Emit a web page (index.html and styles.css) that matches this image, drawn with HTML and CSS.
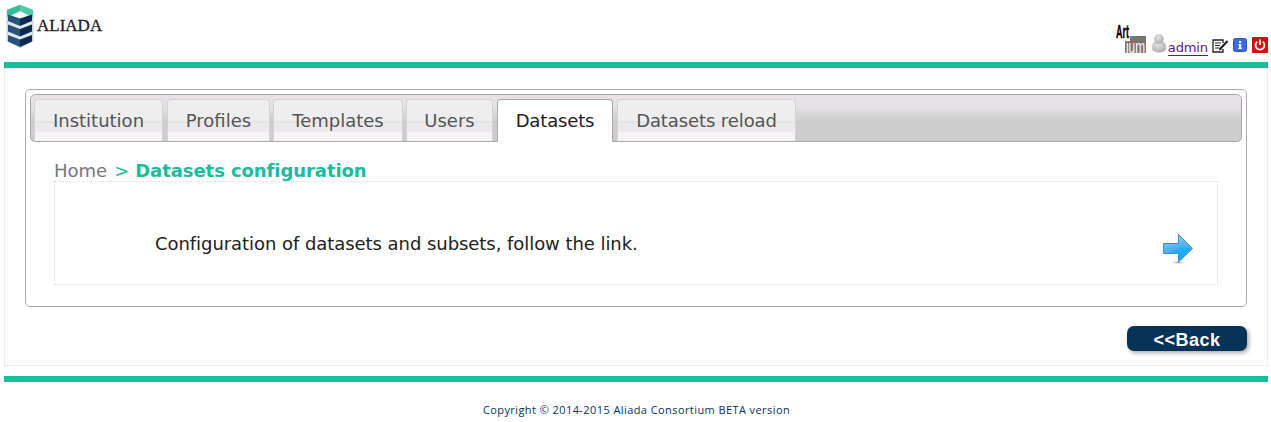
FILE: index.html
```html
<!DOCTYPE html>
<html lang="en">
<head>
<meta charset="utf-8">
<title>Aliada</title>
<link rel="stylesheet" href="styles.css">
</head>
<body>
<header class="header">
  <div class="brand">
    <svg class="brand-mark" width="28" height="44" viewBox="0 0 28 44">
      <path d="M1 6L14 1 27 6V37L14 43.500 1 37Z" fill="#dfe6ec" stroke="#a3b2c0" stroke-width=".6"/>
      <path d="M1 6L14 1V7L6 11 1 13Z" fill="#35bd98"/>
      <path d="M14 1L27 6V13L22 11 14 7Z" fill="#4acda8"/>
      <path d="M5 12L14 7.500 23 12 14 15Z" fill="#fff"/>
      <path d="M2 10.500L14 14.500V22L2 17ZM2 20.500L14 25V32.500L2 27.500ZM2 31L14 35.500V43L2 37.500Z" fill="#28527a"/>
      <path d="M26 10.500L14 14.500V22L26 17ZM26 20.500L14 25V32.500L26 27.500ZM26 31L14 35.500V43L26 37.500Z" fill="#0b2c50"/>
    </svg>
    <span class="brand-name">ALIADA</span>
  </div>
  <div class="user">
    <svg class="artium" width="32" height="32" viewBox="0 0 32 32">
      <path d="M15 14H31V31H10V19H15Z" fill="#777772"/>
      <text class="art" x="1" y="16" textLength="13" lengthAdjust="spacingAndGlyphs">Art</text>
      <text class="ium" x="11" y="31" textLength="19" lengthAdjust="spacingAndGlyphs">ium</text>
    </svg>
    <svg class="person" width="14" height="19" viewBox="0 0 14 19">
      <defs><radialGradient id="grey" cx=".4" cy=".3" r=".8"><stop stop-color="#e2e2e2"/><stop offset="1" stop-color="#aaa"/></radialGradient></defs>
      <path d="M3 8C0 9 0 14 .6 16 3 19 11 19 13.400 16 14 13 14 9 11 8Z" fill="url(#grey)" stroke="#b0b0b0" stroke-width=".5"/>
      <circle cx="7" cy="5" r="4.600" fill="url(#grey)" stroke="#b5b5b5" stroke-width=".5"/>
    </svg>
    <a class="admin" href="#">admin</a>
    <svg class="edit" width="17" height="14" viewBox="0 0 17 14">
      <path d="M11 4V1H1V13H11V10" fill="#fff" stroke="#222" stroke-width="1.300"/>
      <path d="M3 4H9M3 6.500H8M3 9H7" stroke="#222"/>
      <path d="M8 10L15.500 2" stroke="#222" stroke-width="2.200"/>
      <path d="M7 11.500L7.500 8.500 10 10.500Z" fill="#222"/>
    </svg>
    <svg class="info" width="14" height="14" viewBox="0 0 14 14">
      <rect x=".5" y=".5" width="13" height="13" rx="2" fill="#3b6bdc" stroke="#2c50b5"/>
      <path d="M6 3H8.200V5H6ZM5.200 6H8.200V10H9V11H5.200V10H6V7H5.200Z" fill="#fff"/>
    </svg>
    <svg class="power" width="16" height="16" viewBox="0 0 16 16">
      <rect width="16" height="16" rx="1" fill="#d40d0d"/>
      <path d="M5.300 4.600A4.500 4.500 0 1 0 10.700 4.600M8 2.500V8" fill="none" stroke="#fff" stroke-width="1.800"/>
    </svg>
  </div>
</header>
<main class="main">
  <section class="panel">
    <nav class="tabs">
      <a class="tab t1"><span>Institution</span></a>
      <a class="tab t2"><span>Profiles</span></a>
      <a class="tab t3"><span>Templates</span></a>
      <a class="tab t4"><span>Users</span></a>
      <a class="tab t5 active"><span>Datasets</span></a>
      <a class="tab t6"><span>Datasets reload</span></a>
    </nav>
    <div class="crumbs"><span class="home">Home</span><span class="sep">&gt;</span><strong>Datasets configuration</strong></div>
    <div class="content">
      <span class="message">Configuration of datasets and subsets, follow the link.</span>
      <svg class="arrow" width="32" height="32" viewBox="0 0 32 32">
        <defs>
          <linearGradient id="blue" x2=".3" y2="1"><stop stop-color="#a5dcfb"/><stop offset=".5" stop-color="#58b4ee"/><stop offset="1" stop-color="#16a9fa"/></linearGradient>
          <radialGradient id="shade"><stop stop-color="#999"/><stop offset="1" stop-color="#fff" stop-opacity="0"/></radialGradient>
        </defs>
        <ellipse cx="16" cy="29.500" rx="9" ry="2" fill="url(#shade)"/>
        <path d="M1.500 10.500H16.500V1.500L30.500 15.500 16.500 29V20.500H1.500Z" fill="url(#blue)" stroke="#3e8fcd"/>
        <path d="M8 20Q14 14 23 14L29 16 17 27.500V20Z" fill="#079ff5" opacity=".4"/>
      </svg>
    </div>
  </section>
  <button class="back">&lt;&lt;Back</button>
</main>
<footer class="footer"><span>Copyright © 2014-2015 Aliada Consortium BETA version</span></footer>
</body>
</html>
```
FILE: styles.css
```css
* { box-sizing: border-box; }
body { margin: 0; padding: 0 3px 0 4px; background: #fff; font-family: "DejaVu Sans", Verdana, sans-serif; height: 422px; overflow: hidden; }
.header { height: 68px; border-bottom: 6px solid #1abc9c; display: flex; justify-content: space-between; }
.brand { display: flex; padding: 4px 0 0 2px; }
.brand-name { font: 17px/20px "Liberation Serif", serif; color: #222; margin: 12px 0 0 3px; -webkit-text-stroke: .3px #222; }
.user { display: flex; align-items: flex-start; padding-top: 22px; }
.artium { overflow: visible; }
.art { font: bold 19px "Liberation Sans", sans-serif; fill: #000; stroke: #000; stroke-width: .4px; }
.ium { font: 18px "Liberation Sans", sans-serif; fill: #fff; }
.person { margin: 12px 0 0 5px; }
.admin { font-size: 13px; line-height: 16px; height: 16px; margin: 18px 0 0 2px; color: #551a8b; text-decoration: none; border-bottom: 1px solid #551a8b; letter-spacing: -.1px; }
.edit { margin: 17px 0 0 4px; }
.info { margin: 16px 0 0 4px; }
.power { margin: 15px 0 0 5px; }
.main { height: 298px; border: 1px dotted #ddd; padding: 20px; }
.panel { height: 218px; border: 1px solid #aaa; border-radius: 5px; padding: 4px; }
.tabs { height: 48px; border: 1px solid #aaa; border-radius: 5px; display: flex; gap: 4px; padding: 4px 3px 0; background: linear-gradient(#e8e2e7 0%, #e4e0e4 28%, #d8d7d8 42%, #cdcccd 58%, #cdcdcd 100%); }
.tab { height: 42px; flex: none; border: 1px solid #d3d3d3; border-bottom: 0; border-radius: 4px 4px 0 0; background: linear-gradient(#eee 0 50%, #e5e4e5 50% 55%, #ebe9eb 55% 78%, #f7f2f6 78%); color: #555; font-size: 18px; line-height: 41px; text-align: center; white-space: nowrap; }
.t1 { width: 129px; }
.t2 { width: 103px; }
.t3 { width: 130px; margin-left: -1px; }
.t4 { width: 87px; margin-left: -1px; }
.t5 { width: 116px; letter-spacing: -.15px; }
.t6 { width: 179px; letter-spacing: -.1px; }
.active { height: 43px; background: #fff; border-color: #aaa; color: #212121; }
.crumbs { height: 39px; padding: 18px 0 0 24px; font-size: 18px; line-height: 21px; color: #1abc9c; white-space: nowrap; }
.crumbs strong { letter-spacing: -.07px; font-variant-ligatures: none; }
.home { color: #777; }
.sep { margin: 0 6px 0 7px; }
.content { width: 1164px; height: 104px; margin-left: 24px; border: 1px dotted #ddd; display: flex; justify-content: space-between; padding: 50px 23px 0 100px; }
.message { font-size: 18px; line-height: 24px; color: #212121; white-space: nowrap; letter-spacing: -.055px; font-variant-ligatures: none; }
.arrow { margin-top: 1px; }
.back { display: block; margin: 19px 0 0 auto; width: 120px; height: 25px; border: 0; border-radius: 7px; background: #083358; color: #fff; font: bold 18px/25px "Liberation Sans", Arial, sans-serif; letter-spacing: .5px; padding: 2px 0 0; box-shadow: 2px 2px 4px #aaa; }
.footer { margin-top: 10px; height: 46px; border-top: 6px solid #1abc9c; text-align: center; color: #083358; font: 11px/16px "Open Sans", sans-serif; letter-spacing: .42px; padding: 20px 0 0 1px; }
```
